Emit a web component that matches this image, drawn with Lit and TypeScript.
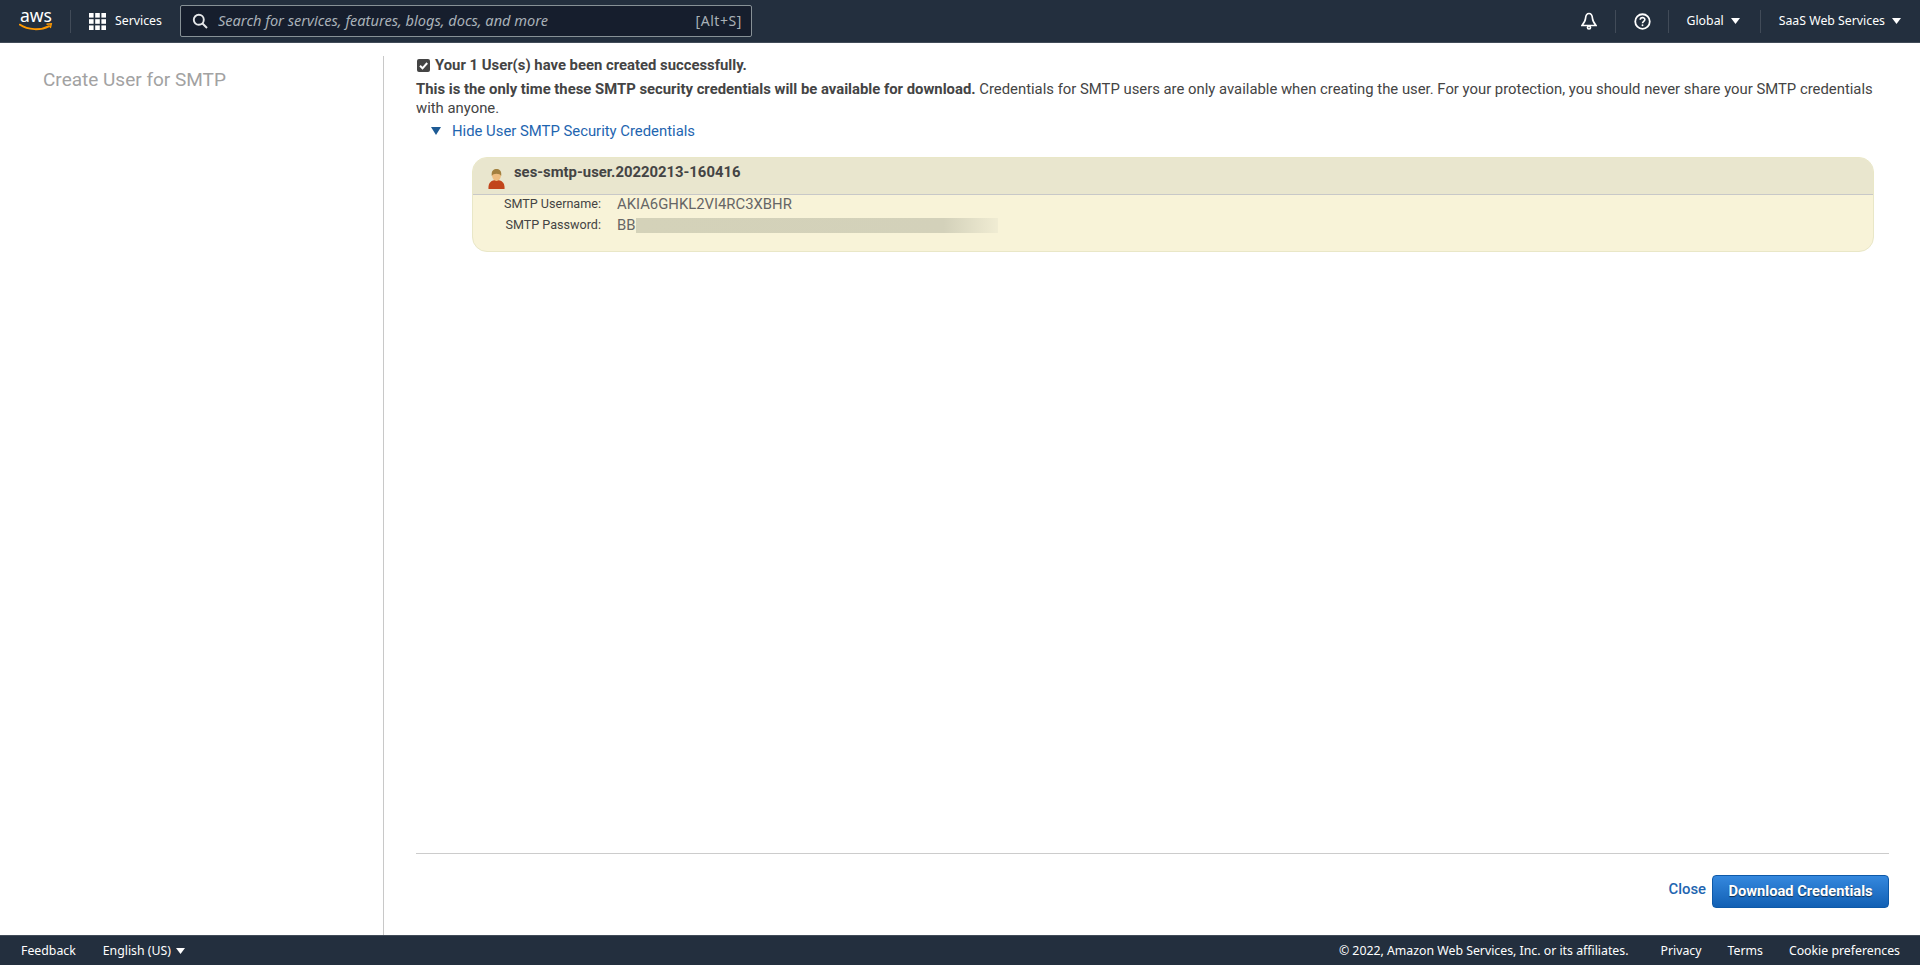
import { LitElement, html, css, svg } from "lit";
import { customElement } from "lit/decorators.js";

const caret = html`<svg class="caret" width="9" height="6" viewBox="0 0 9 6"><path d="M0 0h9L4.500 6z" fill="currentColor"/></svg>`;

@customElement("app-root")
export class AppRoot extends LitElement {
  static styles = css`
    :host { display: flex; flex-direction: column; height: 100vh; min-height: 965px; font-family: Roboto, "Liberation Sans", sans-serif; color: #444; background: #fff; overflow: hidden; }
    .nav { height: 42px; flex: none; background: #232f3e; border-bottom: 1px solid #414b58; display: flex; align-items: center; color: #fff; font-family: "Noto Sans", sans-serif; font-size: 12.3px; box-sizing: content-box; }
    .t { padding-bottom: 2px; }
    .logo { margin-left: 19px; width: 34px; height: 32px; display: block; flex: none; }
    .sep { width: 1px; height: 23px; background: #414b58; flex: none; }
    .logoSep { margin-left: 17px; }
    .grid { margin-left: 18px; display: block; flex: none; }
    .services { margin-left: 9px; }
    .search { margin-left: 18px; width: 570px; height: 30px; background: #161e2d; border: 1px solid #879196; border-radius: 2px; display: flex; align-items: center; box-sizing: content-box; color: #a5acb3; }
    .search svg { margin-left: 11px; flex: none; }
    .placeholder { margin-left: 10px; font-style: italic; font-size: 14.6px; flex: 1; color: #a9b1b8; }
    .hint { font-size: 14px; margin-right: 9px; letter-spacing: 0.55px; color: #a9b1b8; }
    .spacer { flex: 1; }
    .bell { display: block; margin-right: 18px; }
    .help { display: block; margin: 0 17px 0 18px; }
    .region { margin: 0 20px 0 18px; display: flex; align-items: center; gap: 7px; }
    .account { margin: 0 19px 0 18px; display: flex; align-items: center; gap: 7px; }
    .body { flex: 1; min-height: 0; display: flex; }
    .side { width: 383px; flex: none; box-sizing: content-box; margin-top: 13px; border-right: 1px solid #c8c8c8; }
    .side h2 { margin: 0; padding: 13px 0 0 43px; font-size: 19px; font-weight: 400; line-height: 21px; color: #a2a2a2; }
    .main { flex: 1; min-width: 0; padding: 13px 31px 0 32px; display: flex; flex-direction: column; }
    .ok { display: flex; align-items: center; gap: 5px; font-size: 14.85px; font-weight: 700; line-height: 18px; }
    .ok svg { margin-left: 1px; }
    .note { margin: 0; font-size: 14.85px; line-height: 19px; padding: 6px 14px 0 0; }
    .toggle { display: flex; align-items: center; gap: 11px; margin: 4px 0 0 15px; line-height: 18px; font-size: 14.85px; color: #1e65b0; }
    .card { margin: 17px 15px 0 56px; border: 1px solid #e9e7c7; border-radius: 15px; background: #f8f3d8; height: 95px; box-sizing: border-box; overflow: hidden; flex: none; }
    .cardHead { height: 37px; background: #e9e6ce; border-bottom: 1px solid #c8c8c8; display: flex; box-sizing: border-box; }
    .cardHead svg { margin: 11px 0 0 15px; flex: none; }
    .cardHead b { margin: 5px 0 0 9px; font-size: 14.85px; line-height: 18px; font-weight: 700; }
    .rows { display: grid; grid-template-columns: 128px auto; column-gap: 16px; justify-content: start; margin-top: -1px; }
    .k { font-size: 12.6px; text-align: right; line-height: 20.5px; color: #444; }
    .v { font-size: 14.85px; line-height: 20.5px; color: #666; display: flex; align-items: flex-start; }
    .blur { width: 362px; height: 15px; margin-top: 3px; background: linear-gradient(90deg, #d4d2b9 0%, #d3d1ba 85%, #f0ecd3 100%); }
    .grow { flex: 1; }
    .actions { border-top: 1px solid #ccc; height: 81px; display: flex; justify-content: flex-end; align-items: flex-start; box-sizing: content-box; }
    .close { margin-top: 26px; font-size: 14.85px; font-weight: 500; color: #1e65b0; line-height: 18px; }
    .dl { margin: 21px 0 0 6px; width: 177px; height: 33px; box-sizing: border-box; border: 1px solid #0e59a8; border-radius: 4px; background: linear-gradient(#3588de, #1260b4); color: #fff; font: 700 14.7px Roboto, sans-serif; text-shadow: 0 1px 1px rgba(0,0,0,.6); padding: 0 0 2px; }
    .foot { height: 29px; flex: none; background: #232f3e; border-top: 1px solid #414b58; display: flex; align-items: center; color: #fff; font-family: "Noto Sans", sans-serif; font-size: 12.3px; }
    .fb { margin-left: 21px; }
    .lang { margin-left: 27px; display: flex; align-items: center; gap: 5px; }
    .copy { margin-right: 32px; }
    .fl { margin-right: 26px; }
    .fl:last-child { margin-right: 20px; }
  `;

  render() {
    return html`
      <div class="nav">
        <svg class="logo" width="34" height="32" viewBox="0 -5 34 32">
          <text x="1" y="12" textLength="32" lengthAdjust="spacingAndGlyphs" fill="#fff" font-family="Noto Sans, sans-serif" font-size="18">aws</text>
          <path d="M.7 14.600c8.500 5.800 21 6 29.500 1.500" fill="none" stroke="#f90" stroke-width="1.800" stroke-linecap="round"/>
          <path d="M27.500 14.300l4.800-.5-1 4.200" fill="none" stroke="#f90" stroke-width="1.400"/>
        </svg>
        <div class="sep logoSep"></div>
        <svg class="grid" width="17" height="17" viewBox="0 0 17 17" fill="#fff">
          ${[0, 6.2, 12.4].flatMap((y) => [0, 6.2, 12.4].map((x) => svg`<rect x=${x} y=${y} width="4.600" height="4.600"/>`))}
        </svg>
        <span class="services t">Services</span>
        <div class="search">
          <svg width="16" height="16" viewBox="0 0 16 16" fill="none" stroke="#e6e8ea" stroke-width="1.900"><circle cx="6.800" cy="6.800" r="5"/><path d="M10.500 10.500l4.500 4.500"/></svg>
          <span class="placeholder t">Search for services, features, blogs, docs, and more</span>
          <span class="hint t">[Alt+S]</span>
        </div>
        <div class="spacer"></div>
        <svg class="bell" width="16" height="18" viewBox="0 0 16 18" fill="none" stroke="#fff" stroke-width="1.700"><path d="M8 1.500c-2.800 0-3.300 2.500-3.500 5-.2 2.800-1.500 4.500-3.500 7h14c-2-2.500-3.300-4.200-3.500-7-.2-2.500-.7-5-3.500-5z"/><circle cx="8" cy="15.500" r="1.500"/></svg>
        <div class="sep"></div>
        <svg class="help" width="17" height="17" viewBox="0 0 18 18" fill="none" stroke="#fff"><circle cx="9" cy="9" r="7.700" stroke-width="1.900"/><path d="M6.600 7.200c0-3 4.900-3 4.900-.2 0 1.800-2.500 1.800-2.500 3.800" stroke-width="1.700"/><circle cx="9" cy="13" r="1" fill="#fff" stroke="none"/></svg>
        <div class="sep"></div>
        <span class="region"><span class="t">Global</span> ${caret}</span>
        <div class="sep"></div>
        <span class="account"><span class="t">SaaS Web Services</span> ${caret}</span>
      </div>
      <div class="body">
        <div class="side"><h2>Create User for SMTP</h2></div>
        <div class="main">
          <div class="ok">
            <svg width="13" height="13" viewBox="0 0 13 13"><rect width="13" height="13" rx="2" fill="#444"/><path d="M3 6.800l2.500 2.500L10.200 4" fill="none" stroke="#fff" stroke-width="2"/></svg>
            <span>Your 1 User(s) have been created successfully.</span>
          </div>
          <p class="note"><b>This is the only time these SMTP security credentials will be available for download.</b> Credentials for SMTP users are only available when creating the user. For your protection, you should never share your SMTP credentials with anyone.</p>
          <div class="toggle">
            <svg width="10" height="8" viewBox="0 0 10 8"><path d="M0 0h10L5 8z" fill="#1d5a94"/></svg>
            <span>Hide User SMTP Security Credentials</span>
          </div>
          <div class="card">
            <div class="cardHead">
              <svg width="17" height="20" viewBox="0 0 17 20">
                <path d="M.5 20c-.5-6 2.500-9 8-9s8.500 3 8 9c-3 .5-13 .5-16 0z" fill="#c2451b"/>
                <path d="M4 6c0-3 2-5 4.500-5S13 3 13 6c0 3-2 6-4.500 6S4 9 4 6z" fill="#eebd80"/>
                <path d="M3.800 7C3 1.500 6 0 8.500 0s5.500 1.500 4.700 7C12 4 5 4 3.800 7z" fill="#a3803f"/>
              </svg>
              <b>ses-smtp-user.20220213-160416</b>
            </div>
            <div class="rows">
              <span class="k">SMTP Username:</span><span class="v">AKIA6GHKL2VI4RC3XBHR</span>
              <span class="k">SMTP Password:</span><span class="v">BB<span class="blur"></span></span>
            </div>
          </div>
          <div class="grow"></div>
          <div class="actions">
            <span class="close">Close</span>
            <button class="dl">Download Credentials</button>
          </div>
        </div>
      </div>
      <div class="foot">
        <span class="fb">Feedback</span>
        <span class="lang">English (US) ${caret}</span>
        <div class="spacer"></div>
        <span class="copy">© 2022, Amazon Web Services, Inc. or its affiliates.</span>
        <span class="fl">Privacy</span>
        <span class="fl">Terms</span>
        <span class="fl">Cookie preferences</span>
      </div>
    `;
  }
}
